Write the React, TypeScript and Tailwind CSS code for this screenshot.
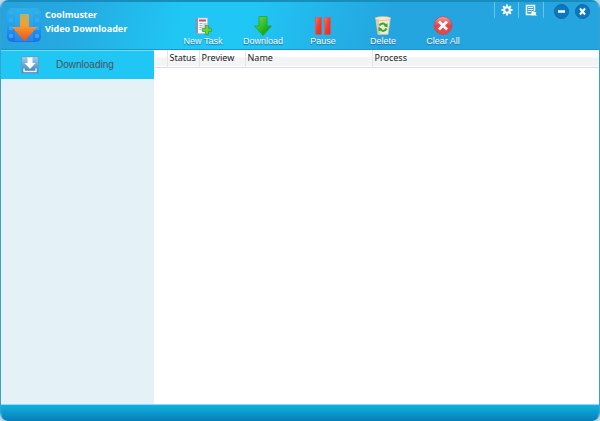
import React, { useState } from 'react';

const LogoIcon: React.FC = () => (
  <svg width="34" height="34" viewBox="0 0 34 34" aria-hidden="true">
    <defs>
      <linearGradient id="logoBg" x1="0" y1="0" x2="0" y2="1">
        <stop offset="0" stopColor="#2fb0e4" />
        <stop offset="0.5" stopColor="#229ff0" />
        <stop offset="1" stopColor="#1d6fe8" />
      </linearGradient>
      <linearGradient id="logoArrow" x1="0" y1="0" x2="0" y2="1">
        <stop offset="0" stopColor="#b9b168" />
        <stop offset="0.4" stopColor="#f5a02c" />
        <stop offset="1" stopColor="#ee4f22" />
      </linearGradient>
    </defs>
    <rect width="34" height="34" rx="5" fill="url(#logoBg)" />
    <rect x="8" y="1" width="18" height="32" fill="#35b5f5" opacity="0.3" />
    <g fill="#37b1ee" opacity="0.8">
      <rect x="2" y="3" width="4" height="3" rx="1" />
      <rect x="2" y="10" width="4" height="4" rx="1" />
      <rect x="2" y="18" width="4" height="4" rx="1" />
      <rect x="2" y="26" width="4" height="4" rx="1" />
      <rect x="28" y="3" width="4" height="3" rx="1" />
      <rect x="28" y="10" width="4" height="4" rx="1" />
      <rect x="28" y="18" width="4" height="4" rx="1" />
      <rect x="28" y="26" width="4" height="4" rx="1" />
    </g>
    <path d="M13 6h9v13h8L17.5 33.500 5 19h8z" fill="url(#logoArrow)" />
  </svg>
);

const NewTaskIcon: React.FC = () => (
  <svg width="18" height="20" viewBox="0 0 18 20" aria-hidden="true">
    <path d="M2.500 2h11v15.500h-11z" fill="#f5f8fd" stroke="#a5bbd2" strokeWidth="0.7" />
    <path d="M1.500 2h2.500v15.500H1.500z" fill="#7f95b8" />
    <path d="M5 4.500h7" stroke="#c94d5a" strokeWidth="2" />
    <path d="M5.500 7.500h3M5.500 9.500h3M5.500 11.500h3M5.500 13.500h2" stroke="#9aaed0" />
    <path d="M9.500 7h3v5h-3z" fill="#bac9e6" />
    <path
      d="M11.500 9.500h3v3h3v3h-3v3h-3v-3h-3v-3h3z"
      fill="#6cd03f"
      stroke="#38a426"
      strokeWidth="0.8"
    />
  </svg>
);

const DownloadIcon: React.FC = () => (
  <svg width="18" height="20" viewBox="0 0 18 20" aria-hidden="true">
    <defs>
      <linearGradient id="green" x1="0" y1="0" x2="1" y2="1">
        <stop offset="0" stopColor="#72e04c" />
        <stop offset="0.5" stopColor="#30be24" />
        <stop offset="1" stopColor="#078c12" />
      </linearGradient>
    </defs>
    <path
      d="M5 0.500h8v9.500h4.500L9 19.500.500 10H5z"
      fill="url(#green)"
      stroke="#25a331"
      strokeWidth="0.8"
    />
  </svg>
);

const PauseIcon: React.FC = () => (
  <svg width="18" height="20" viewBox="0 0 18 20" aria-hidden="true">
    <defs>
      <linearGradient id="red" x1="0" y1="0" x2="1" y2="1">
        <stop offset="0" stopColor="#ff7160" />
        <stop offset="0.5" stopColor="#ef3d31" />
        <stop offset="1" stopColor="#d92e26" />
      </linearGradient>
    </defs>
    <rect x="1.500" y="1.500" width="6" height="17" fill="url(#red)" stroke="#d65a55" strokeWidth="0.6" />
    <rect x="10.500" y="1.500" width="6" height="17" fill="url(#red)" stroke="#d65a55" strokeWidth="0.6" />
  </svg>
);

const DeleteIcon: React.FC = () => (
  <svg width="18" height="20" viewBox="0 0 18 20" aria-hidden="true">
    <path d="M1.500 1.500h15L14 18.500H4z" fill="#efead8" stroke="#cdbf96" strokeWidth="0.6" />
    <path d="M1.500 1.500h3L6.500 18.500H4z" fill="#d6ceaf" />
    <ellipse cx="9" cy="2.500" rx="7.500" ry="2" fill="#f5e8c9" stroke="#d0bd92" strokeWidth="0.7" />
    <path
      d="M5.500 9.500c1.500-2.500 4.500-2.500 6-.5M12.500 12.500c-1.500 3-4.500 3-6 1"
      fill="none"
      stroke="#38a625"
      strokeWidth="2"
    />
    <path d="M13.500 7v4.500L9.500 10zM4.500 15.500V11l4 2z" fill="#38a625" />
  </svg>
);

const ClearIcon: React.FC = () => (
  <svg width="20" height="20" viewBox="0 0 20 20" aria-hidden="true">
    <defs>
      <linearGradient id="redBall" x1="0" y1="0" x2="0" y2="1">
        <stop offset="0" stopColor="#f0a0a5" />
        <stop offset="0.5" stopColor="#df454b" />
        <stop offset="1" stopColor="#e84a4b" />
      </linearGradient>
    </defs>
    <circle cx="10" cy="9.500" r="9" fill="url(#redBall)" stroke="#c9434e" strokeWidth="0.7" />
    <path d="M6 5.500l8 8M14 5.500l-8 8" stroke="#fff" strokeWidth="2.800" />
  </svg>
);

const TrayIcon: React.FC = () => (
  <svg width="18" height="18" viewBox="0 0 18 18" aria-hidden="true">
    <defs>
      <linearGradient id="tray" x1="0" y1="0" x2="0" y2="1">
        <stop offset="0" stopColor="#a2cfe9" />
        <stop offset="1" stopColor="#357fb1" />
      </linearGradient>
    </defs>
    <rect x="0.500" y="0.500" width="17" height="17" rx="1.500" fill="url(#tray)" stroke="#5ba5cc" />
    <path d="M3 12.500v3h12v-3" fill="none" stroke="#e7f4fb" strokeWidth="1.500" />
    <path d="M6.500 1.500h5V7h3L9 13 3.500 7h3z" fill="#fff" />
  </svg>
);

const GearIcon: React.FC = () => (
  <svg width="12" height="12" viewBox="0 0 12 12" aria-hidden="true">
    <g stroke="#fff" strokeWidth="2">
      <path d="M6 .500v2M6 9.500v2M.500 6h2M9.500 6h2M2.100 2.100l1.400 1.400M8.500 8.500l1.400 1.400M2.100 9.900l1.400-1.400M8.500 3.500l1.400-1.400" />
      <circle cx="6" cy="6" r="2.800" fill="none" />
    </g>
  </svg>
);

const LogIcon: React.FC = () => (
  <svg width="12" height="12" viewBox="0 0 12 12" aria-hidden="true">
    <path d="M7 10.500H1.500V1.500h8V7" fill="none" stroke="#fff" strokeWidth="1.500" />
    <path d="M3 3.500h5M3 5.500h5M3 7.500h3" stroke="#fff" />
    <path d="M6.500 6.500l5 2-1 1.500 1.500 1.500H6.500z" fill="#fff" />
  </svg>
);

const actions = [
  { label: 'New Task', icon: <NewTaskIcon /> },
  { label: 'Download', icon: <DownloadIcon /> },
  { label: 'Pause', icon: <PauseIcon /> },
  { label: 'Delete', icon: <DeleteIcon /> },
  { label: 'Clear All', icon: <ClearIcon /> },
];

const windowButton =
  'flex size-[15px] items-center justify-center rounded-full border border-[#17679f] bg-[#0c77bf]';

const App: React.FC = () => {
  const [view, setView] = useState('downloading');

  return (
    <div className="min-h-screen bg-[#c3d5df] font-['Liberation_Sans',sans-serif]">
      <div className="flex min-h-screen flex-col overflow-hidden rounded-lg border-x border-[#35a3ce] bg-white">
        {/* Title bar and toolbar */}
        <header className="flex h-[50px] shrink-0 border-t-2 border-b border-t-[#168dbd] border-b-[#1497d2] bg-[linear-gradient(105deg,#27a2dc_0%,#25a9e0_12%,#20c6f4_30%,#20c6f4_42%,#25a5df_64%,#25a5df_100%)]">
          <div className="flex w-[172px] shrink-0 gap-1 pt-[6px] pl-[6px]">
            <LogoIcon />
            <h1 className="font-['Open_Sans',sans-serif] text-[9px] leading-[14px] font-bold text-white">
              Coolmuster
              <br />
              Video Downloader
            </h1>
          </div>

          <nav className="flex" aria-label="Toolbar">
            {actions.map((action) => (
              <button
                key={action.label}
                type="button"
                className="flex w-[60px] flex-col items-center pt-[14px] text-[9px] leading-[10px] whitespace-nowrap text-white text-shadow-[0_1px_1px_#176a96]"
              >
                {action.icon}
                <span>{action.label}</span>
              </button>
            ))}
          </nav>

          {/* Window controls */}
          <div className="ml-auto flex h-4 items-center pr-[9px]">
            <button type="button" aria-label="Settings" className="flex h-4 w-6 items-center justify-center border-l border-[#6dc3e4]">
              <GearIcon />
            </button>
            <button type="button" aria-label="Log" className="mr-[10px] flex h-4 w-[26px] items-center justify-center border-x border-[#6dc3e4]">
              <LogIcon />
            </button>
            <div className="flex gap-[6px] pt-[2px]">
              <button type="button" aria-label="Minimize" className={windowButton}>
                <svg width="9" height="9" viewBox="0 0 9 9">
                  <path d="M1 4.500h7" stroke="#fff" strokeWidth="2.500" />
                </svg>
              </button>
              <button type="button" aria-label="Close" className={windowButton}>
                <svg width="9" height="9" viewBox="0 0 9 9">
                  <path d="M2 1.500l5 6M7 1.500l-5 6" stroke="#fff" strokeWidth="2" />
                </svg>
              </button>
            </div>
          </div>
        </header>

        <div className="flex flex-1">
          <aside className="w-[153px] shrink-0 bg-[#e4f1f6]">
            <button
              type="button"
              aria-pressed={view === 'downloading'}
              onClick={() => setView('downloading')}
              className="flex h-[29px] w-full items-center gap-[17px] border-t border-[#78d9f5] bg-[#20c6f4] pl-5 text-[10px] text-[#4a5257]"
            >
              <TrayIcon />
              <span className="pb-[2px]">Downloading</span>
            </button>
          </aside>

          {/* Task list */}
          <main className="min-w-0 flex-1">
            <table className="w-full table-fixed border-collapse text-left font-['Noto_Sans',sans-serif] text-[9px] leading-4 text-[#222]">
              <thead>
                <tr className="h-[17px] border-b border-[#d9dde0] bg-linear-to-b from-white from-40% to-[#f3f4f6] to-50%">
                  <th className="w-[13px] border-r border-[#e3e6e9] p-0" aria-label="Select" />
                  <th className="w-8 border-r border-[#e3e6e9] p-0 pl-[2px] font-normal">Status</th>
                  <th className="w-[46px] border-r border-[#e3e6e9] p-0 pl-[2px] font-normal">Preview</th>
                  <th className="w-[127px] border-r border-[#e3e6e9] p-0 pl-[2px] font-normal">Name</th>
                  <th className="p-0 pl-[2px] font-normal">Process</th>
                </tr>
              </thead>
            </table>
          </main>
        </div>

        <footer className="h-[17px] shrink-0 border-t border-[#8bdcf0] bg-linear-to-b from-[#10b2e0] to-[#087db8]" />
      </div>
    </div>
  );
};

export default App;
